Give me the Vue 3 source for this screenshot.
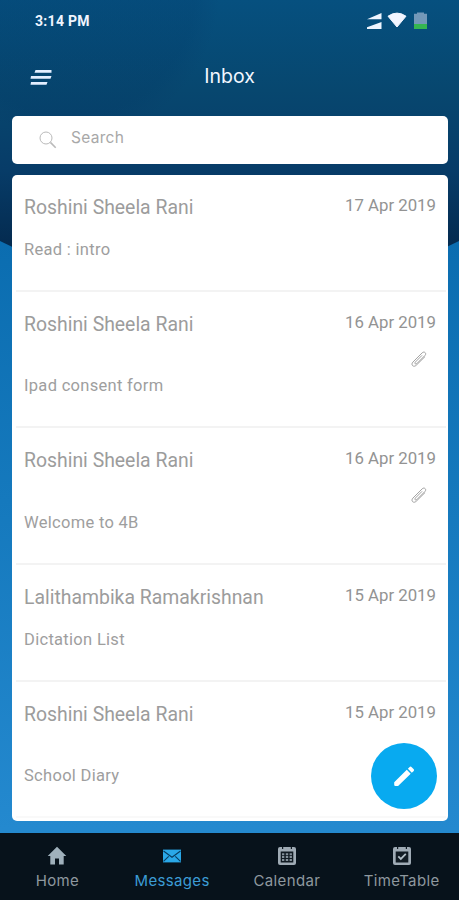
<template>
  <div class="screen">
    <div class="backdrop"></div>
    <div class="status-bar">
      <span class="time">3:14 PM</span>
      <svg class="status-icons" width="62" height="18" viewBox="0 0 62 18">
        <path d="M1 7.2 15.5 1v6.2zM1 17v-1.8L15.5 10v7z" fill="#eef5ff" />
        <path
          d="M22 4.2Q31 -2 40 4.2L31 15z"
          fill="#f1f5ff"
          stroke="#f1f5ff"
          stroke-linejoin="round"
        />
        <path d="M48 1.8h3V.5h7v1.3h3V17H48z" fill="#7398b8" />
        <path d="M48 12h13v5H48z" fill="#35b651" />
      </svg>
    </div>
    <header class="header">
      <svg class="menu" width="22" height="17" viewBox="0 0 22 17">
        <path d="M5.5 1h16v2.8h-17zM1 7h20.5l-1 2.8H.5zM1 13h16.5l-1 2.8H.5z" fill="#e3eeff" />
      </svg>
      <h1>Inbox</h1>
    </header>
    <div class="search">
      <svg width="18" height="18" viewBox="0 0 18 18" fill="none" stroke="#bababa">
        <circle cx="7" cy="7" r="6" />
        <path d="m11.4 11.4 5.3 5.3" stroke-width="1.6" />
      </svg>
      <span>Search</span>
    </div>
    <main class="messages">
      <article
        v-for="message in messages"
        :key="message.id"
        class="message"
        :class="{ tall: message.tall }"
      >
        <div class="message-top">
          <span class="sender">{{ message.sender }}</span>
          <span class="date">{{ message.date }}</span>
        </div>
        <div class="attachment">
          <svg
            v-if="message.attachment"
            width="18"
            height="18"
            viewBox="0 0 18 18"
            fill="none"
            stroke="#a3a3a3"
            stroke-width="1"
            stroke-linecap="round"
          >
            <path
              d="M14.8 6.8 6.2 15.3c-2.7 2.5-5.8-.5-3.3-3.2L12.2 2.8c2-2 4.8.5 2.8 2.6l-8.2 8.2c-1.3 1.2-2.7-.3-1.5-1.5l6.5-6.5"
            />
          </svg>
        </div>
        <p class="subject">{{ message.subject }}</p>
      </article>
      <button class="compose" aria-label="Compose">
        <svg width="24" height="24" viewBox="0 0 24 24" fill="#fff">
          <path
            d="M2.2 18.2 14.8 5.8l3.9 3.9L6.1 22H3.4q-1.2 0-1.2-1.2zM15.9 4.7l1.5-1.5c.8-.8 1.6-.8 2.3 0l1.8 1.8c.7.7.7 1.5 0 2.2l-1.7 1.5z"
          />
        </svg>
      </button>
    </main>
    <nav class="tabs">
      <div class="tab home">
        <svg width="20" height="20" viewBox="0 0 20 20" fill="#9fb0bb">
          <path d="M10 .8 19.3 10h-2.6v8.6H12v-6H8v6H3.3V10H.7z" />
        </svg>
        <span>Home</span>
      </div>
      <div class="tab mail">
        <svg width="20" height="20" viewBox="0 0 20 20">
          <path d="M1 3.6h18v12.8H1z" fill="#2aa8e8" />
          <path
            d="m1.5 5 8.5 6.3L18.5 5M1.5 15.3l5.2-5M18.5 15.3l-5.2-5"
            fill="none"
            stroke="#083d60"
            stroke-width="1.1"
          />
        </svg>
        <span>Messages</span>
      </div>
      <div class="tab calendar">
        <svg width="20" height="20" viewBox="0 0 20 20">
          <rect x="1" y="1" width="18" height="18" rx="2" fill="#9fabb5" />
          <path d="M3.7 5.4h12.6v11H3.7zM5 1h1.2v2H5zM13.8 1H15v2h-1.2z" fill="#111b23" />
          <path
            d="M5 7.2h2.3v2H5zm3.8 0h2.4v2H8.8zm3.8 0h2.3v2h-2.3zM5 10.1h2.3v2H5zm3.8 0h2.4v2H8.8zm3.8 0h2.3v2h-2.3zM5 13h2.3v2H5zm3.8 0h2.4v2H8.8zm3.8 0h2.3v2h-2.3z"
            fill="#84919b"
          />
        </svg>
        <span>Calendar</span>
      </div>
      <div class="tab timetable">
        <svg width="20" height="20" viewBox="0 0 20 20">
          <rect x="1" y="1" width="18" height="18" rx="2" fill="#9fabb5" />
          <path d="M3.7 5.4h12.6v11H3.7zM5 1h1.2v2H5zM13.8 1H15v2h-1.2z" fill="#111b23" />
          <path d="m6.3 10.4 2.5 2.5 5-5" fill="none" stroke="#b2bec6" stroke-width="1.8" />
        </svg>
        <span>TimeTable</span>
      </div>
    </nav>
  </div>
</template>

<script setup>
const messages = [
  { id: 1, sender: "Roshini Sheela Rani", date: "17 Apr 2019", subject: "Read : intro" },
  {
    id: 2,
    sender: "Roshini Sheela Rani",
    date: "16 Apr 2019",
    subject: "Ipad consent form",
    attachment: true,
    tall: true,
  },
  {
    id: 3,
    sender: "Roshini Sheela Rani",
    date: "16 Apr 2019",
    subject: "Welcome to 4B",
    attachment: true,
    tall: true,
  },
  { id: 4, sender: "Lalithambika Ramakrishnan", date: "15 Apr 2019", subject: "Dictation List" },
  { id: 5, sender: "Roshini Sheela Rani", date: "15 Apr 2019", subject: "School Diary", tall: true },
];
</script>

<style>
body {
  margin: 0;
}
</style>

<style scoped>
.screen {
  position: relative;
  display: flex;
  flex-direction: column;
  box-sizing: border-box;
  width: 459px;
  height: 900px;
  overflow: hidden;
  background: linear-gradient(#0b6db0 240px, #1579bd 500px, #2489cf 830px);
  font-family: Roboto, sans-serif;
}

.backdrop {
  position: absolute;
  top: 0;
  left: -60px;
  right: -60px;
  height: 286px;
  border-radius: 0 0 50% 50% / 0 0 115px 115px;
  background:
    radial-gradient(circle at 130px -10px, rgba(0, 45, 95, 0.13) 125px, transparent 150px),
    linear-gradient(#06507f, #07476f 90px, #073c68 170px, #042b50 245px);
}

.status-bar {
  position: relative;
  display: flex;
  justify-content: space-between;
  box-sizing: border-box;
  height: 44px;
  padding: 12px 31px 0 35px;
}

.time {
  color: #eff5ff;
  font-size: 14px;
  font-weight: 700;
  line-height: 18px;
  letter-spacing: 0.3px;
}

.header {
  position: relative;
  display: grid;
  grid-template-columns: 1fr auto 1fr;
  align-items: center;
  height: 64px;
  padding: 0 30px;
}

.menu {
  margin-top: 2px;
}

h1 {
  margin: 0;
  color: #f2f7ff;
  font-family: Inter, sans-serif;
  font-size: 19.5px;
  font-weight: 400;
}

.search {
  position: relative;
  display: flex;
  align-items: center;
  gap: 14px;
  box-sizing: border-box;
  height: 48px;
  margin: 8px 11px 0 12px;
  padding: 0 27px;
  border-radius: 5px;
  background: #fff;
  color: #a8a8a8;
  font-family: Inter, sans-serif;
  font-size: 15.5px;
  letter-spacing: 0.3px;
}

.search span {
  padding-bottom: 5px;
}

.messages {
  position: relative;
  height: 646px;
  margin: 11px 11px 0 12px;
  border-radius: 5px;
  background: #fff;
}

.message {
  box-sizing: border-box;
  height: 116.7px;
  margin: 0 2px 0 4px;
  padding: 20px 10px 0 8px;
  border-bottom: 2px solid #f3f3f3;
}

.message.tall {
  height: 136.6px;
}

.message:last-of-type {
  border-bottom-color: #f9f9f9;
}

.message-top {
  display: flex;
  justify-content: space-between;
  height: 24px;
}

.sender {
  color: #9c9c9c;
  font-size: 19.4px;
  line-height: 25px;
}

.date {
  color: #939393;
  font-size: 16.8px;
  line-height: 21px;
}

.attachment {
  display: flex;
  justify-content: flex-end;
  height: 20px;
  padding-right: 8px;
}

.message.tall .attachment {
  height: 39.7px;
}

.attachment svg {
  margin-top: 14px;
}

.subject {
  margin: 0;
  color: #9e9e9e;
  font-size: 16.5px;
  line-height: 22px;
  letter-spacing: 0.3px;
}

.compose {
  position: absolute;
  right: 11px;
  bottom: 12px;
  display: flex;
  align-items: center;
  justify-content: center;
  width: 66px;
  height: 66px;
  padding: 0;
  border: 0;
  border-radius: 50%;
  background: #08aaf0;
}

.tabs {
  position: relative;
  display: grid;
  grid-template-columns: repeat(4, 1fr);
  height: 67px;
  margin-top: auto;
  background: #07121b;
}

.tab {
  display: flex;
  flex-direction: column;
  align-items: center;
  padding-top: 13px;
  color: #8e989f;
  font-family: Inter, sans-serif;
  font-size: 15px;
  letter-spacing: 0.35px;
}

.tab span {
  margin-top: 6px;
  line-height: 18px;
}

.tab.mail {
  color: #3c9cd5;
}
</style>
